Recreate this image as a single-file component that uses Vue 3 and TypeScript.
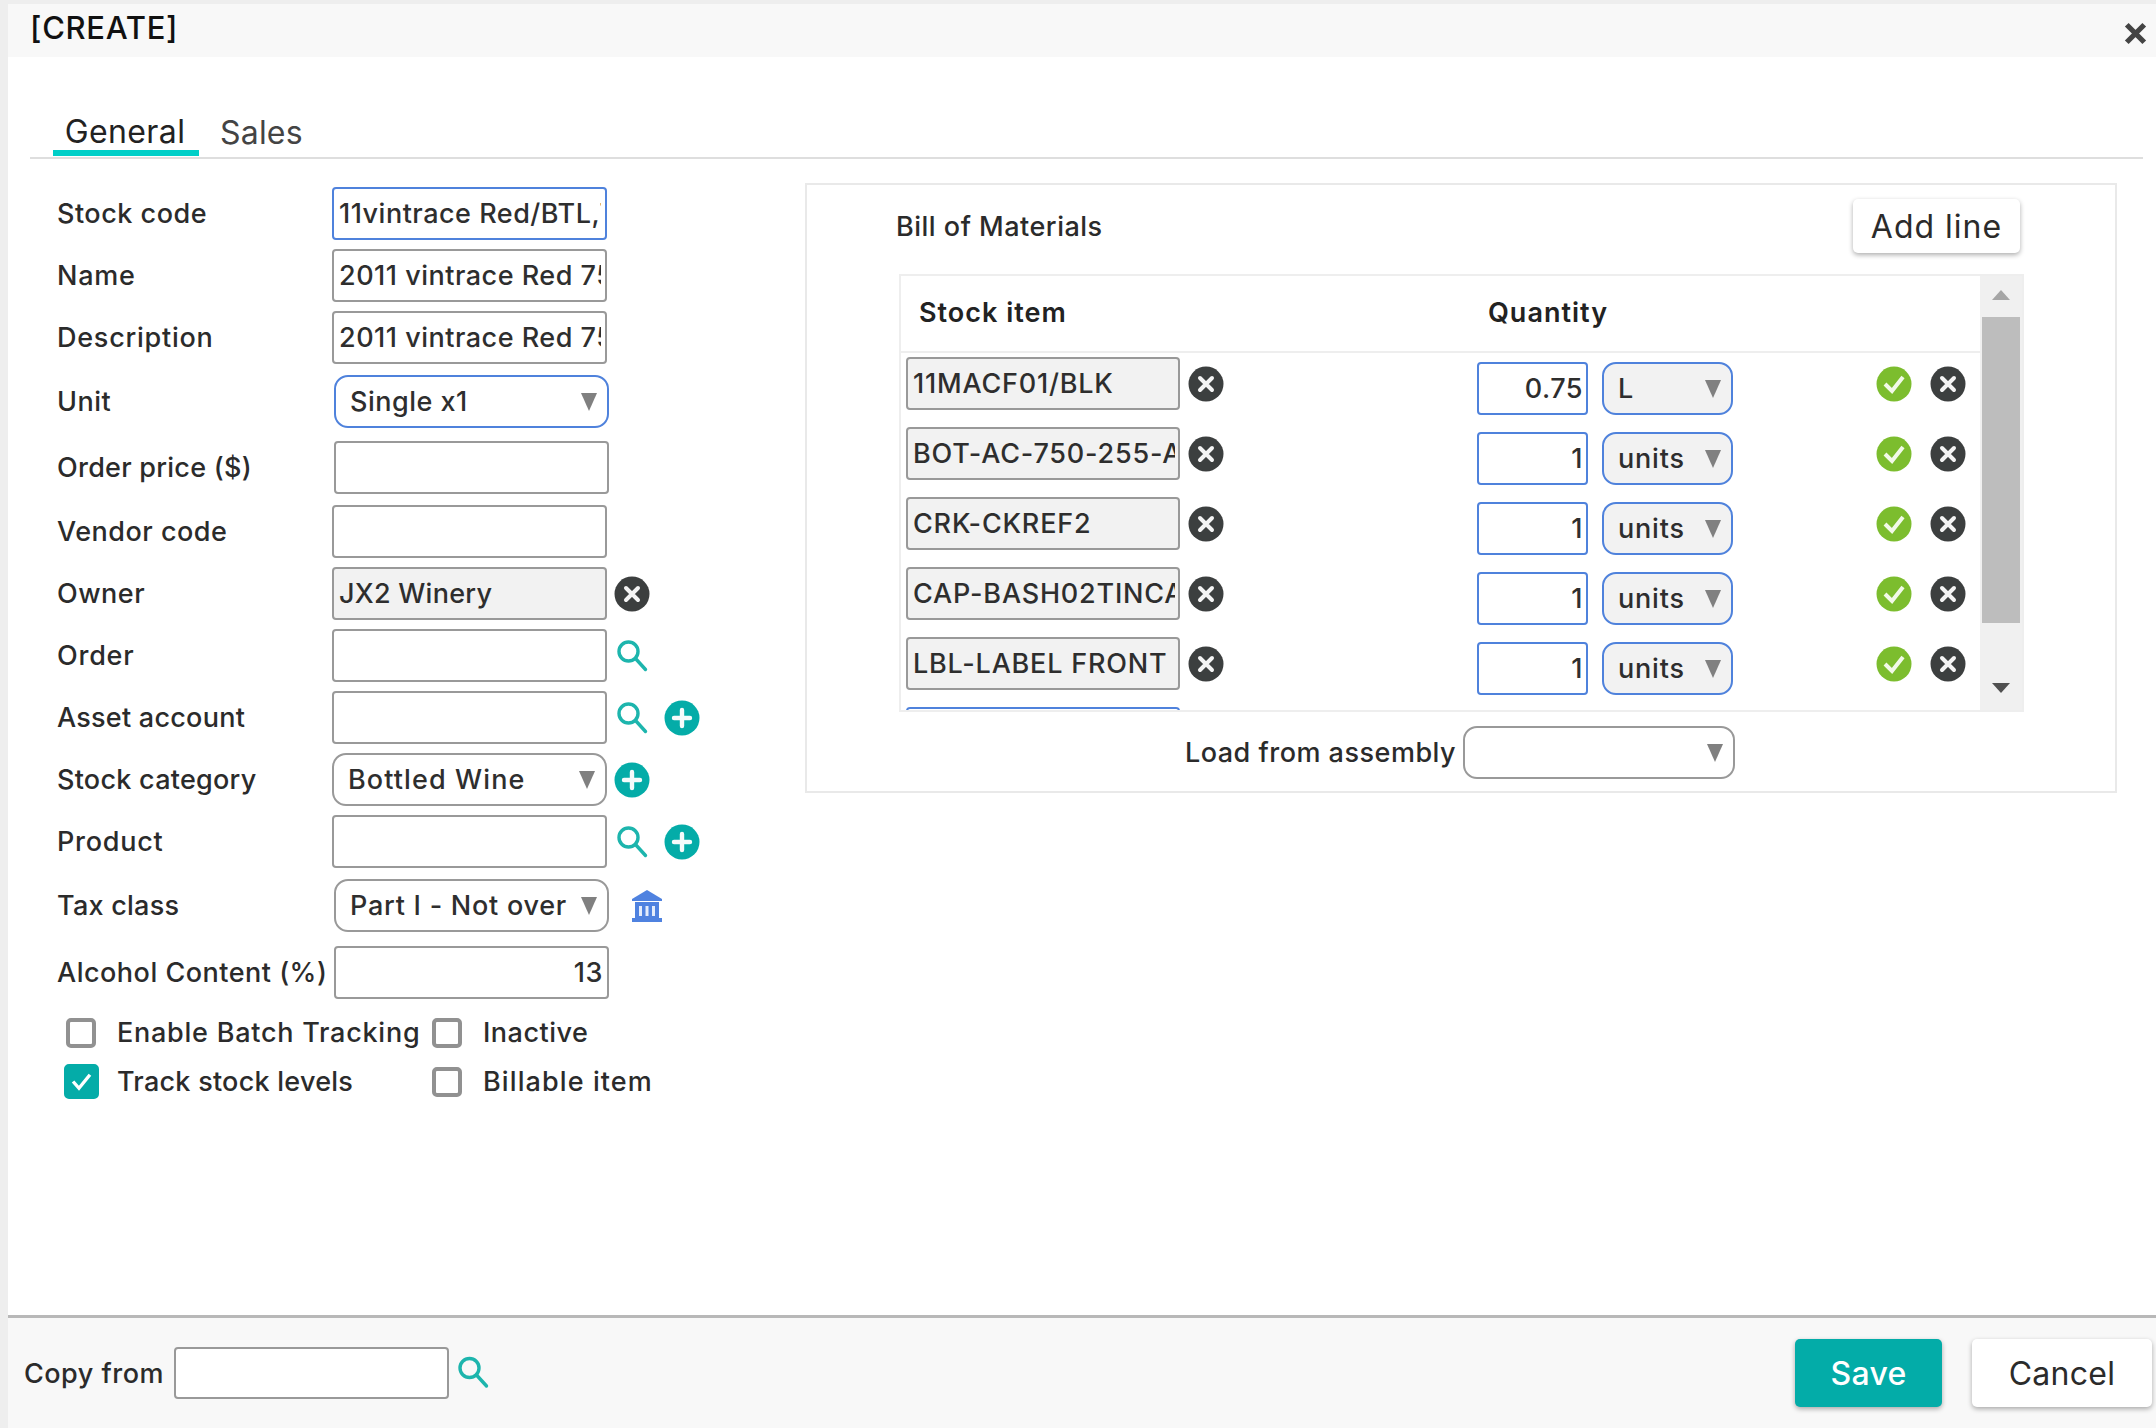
<script setup lang="ts">
interface FormRow {
  label: string
  kind: 'input' | 'locked' | 'select' | 'number'
  value?: string
  focus?: boolean
  shift?: boolean
  gap: string
  icons?: string[]
  track?: string
  valueTrack?: string
}

const rows: FormRow[] = [
  { label: 'Stock code', kind: 'input', value: '11vintrace Red/BTL,750', focus: true, gap: 'g0' },
  { label: 'Name', kind: 'input', value: '2011 vintrace Red 750ml', gap: 'g9', track: 'ls-wide' },
  { label: 'Description', kind: 'input', value: '2011 vintrace Red 750ml', gap: 'g9', track: 'ls-wide' },
  { label: 'Unit', kind: 'select', value: 'Single x1', focus: true, shift: true, gap: 'g11' },
  { label: 'Order price ($)', kind: 'input', value: '', shift: true, gap: 'g13', track: 'ls-tight' },
  { label: 'Vendor code', kind: 'input', value: '', gap: 'g11' },
  { label: 'Owner', kind: 'locked', value: 'JX2 Winery', gap: 'g9', icons: ['clear'], valueTrack: 'ls-tight' },
  { label: 'Order', kind: 'input', value: '', gap: 'g9', icons: ['search'], track: 'ls-wide' },
  { label: 'Asset account', kind: 'input', value: '', gap: 'g9', icons: ['search', 'plus'], track: 'ls-tight' },
  { label: 'Stock category', kind: 'select', value: 'Bottled Wine', gap: 'g9', icons: ['plus'], track: 'ls-tight', valueTrack: 'ls-wider' },
  { label: 'Product', kind: 'input', value: '', gap: 'g9', icons: ['search', 'plus'], track: 'ls-wide' },
  { label: 'Tax class', kind: 'select', value: 'Part I - Not over', shift: true, gap: 'g11', icons: ['bank'], track: 'ls-tight', valueTrack: 'ls-wide' },
  { label: 'Alcohol Content (%)', kind: 'number', value: '13', shift: true, gap: 'g14' }
]

const lines = [
  { item: '11MACF01/BLK', qty: '0.75', unit: 'L' },
  { item: 'BOT-AC-750-255-ANTIQUE', qty: '1', unit: 'units' },
  { item: 'CRK-CKREF2', qty: '1', unit: 'units' },
  { item: 'CAP-BASH02TINCAP', qty: '1', unit: 'units' },
  { item: 'LBL-LABEL FRONT', qty: '1', unit: 'units' }
]
</script>

<template>
  <div class="root">
    <header class="head">
      <h1 class="title">[CREATE]</h1>
      <svg class="close" viewBox="0 0 20 20" aria-label="Close">
        <path d="M3 3 L17 17 M17 3 L3 17" />
      </svg>
    </header>

    <main class="main">
      <nav class="tabs">
        <span class="tab active">General</span>
        <span class="tab">Sales</span>
      </nav>

      <div class="content">
        <section class="form">
          <div v-for="r in rows" :key="r.label" class="row" :class="r.gap">
            <label class="lbl" :class="r.track">{{ r.label }}</label>
            <div class="ctl" :class="{ shift: r.shift }">
              <input
                v-if="r.kind === 'input' || r.kind === 'number' || r.kind === 'locked'"
                class="field"
                :class="[{ focus: r.focus, locked: r.kind === 'locked', num: r.kind === 'number' }, r.valueTrack]"
                :value="r.value"
                readonly
              />
              <div v-else class="select" :class="[{ focus: r.focus }, r.valueTrack]">
                <span class="sel-text">{{ r.value }}</span>
                <i class="arrow"></i>
              </div>
            </div>
            <div class="icons" v-if="r.icons">
              <template v-for="ic in r.icons" :key="ic">
                <svg v-if="ic === 'clear'" class="ico" viewBox="0 0 36 36">
                  <circle cx="18" cy="18" r="17.5" fill="#3c3f3f" />
                  <path d="M12 12 L24 24 M24 12 L12 24" stroke="#f4f4f4" stroke-width="4" stroke-linecap="round" />
                </svg>
                <svg v-else-if="ic === 'search'" class="ico" viewBox="0 0 36 36">
                  <circle cx="14.5" cy="13.5" r="9.5" fill="none" stroke="#1db5ad" stroke-width="3.4" />
                  <path d="M21.5 20.5 L31.5 31.5" stroke="#1db5ad" stroke-width="3.4" stroke-linecap="round" />
                </svg>
                <svg v-else-if="ic === 'plus'" class="ico" viewBox="0 0 36 36">
                  <circle cx="18" cy="18" r="17.5" fill="#04aca8" />
                  <path d="M18 10 V26 M10 18 H26" stroke="#f4fbfb" stroke-width="4.4" stroke-linecap="round" />
                </svg>
                <svg v-else class="ico bank" viewBox="0 0 36 36">
                  <path d="M18 2 L33 11 V13 H3 V11 Z" fill="#4f82e0" />
                  <path d="M6 14 H30 V30 H6 Z" fill="#4f82e0" />
                  <path d="M10 18 H13 V28 H10 Z M16.5 18 H19.5 V28 H16.5 Z M23 18 H26 V28 H23 Z" fill="#e4ecfb" />
                  <path d="M3 30 H33 V34 H3 Z" fill="#4f82e0" />
                </svg>
              </template>
            </div>
          </div>

          <div class="checks">
            <label class="chk ls-wide"><span class="box"></span>Enable Batch Tracking</label>
            <label class="chk"><span class="box"></span>Inactive</label>
            <label class="chk ls-tight">
              <span class="box on">
                <svg viewBox="0 0 32 32"><path d="M6 16 L13 24 L26 8" fill="none" stroke="#fff" stroke-width="4" /></svg>
              </span>Track stock levels
            </label>
            <label class="chk ls-wider"><span class="box"></span>Billable item</label>
          </div>
        </section>

        <section class="bom">
          <div class="bom-head">
            <span class="bom-title">Bill of Materials</span>
            <button class="btn add">Add line</button>
          </div>

          <div class="tbl">
            <div class="tbl-body">
              <div class="tbl-head">
                <span class="th-item">Stock item</span>
                <span class="th-qty">Quantity</span>
              </div>
              <div class="tbl-rows">
                <div v-for="l in lines" :key="l.item" class="line">
                  <input class="field locked item" :value="l.item" readonly />
                  <svg class="ico item-x" viewBox="0 0 36 36">
                    <circle cx="18" cy="18" r="17.5" fill="#3c3f3f" />
                    <path d="M12 12 L24 24 M24 12 L12 24" stroke="#f4f4f4" stroke-width="4" stroke-linecap="round" />
                  </svg>
                  <input class="field focus num qty" :value="l.qty" readonly />
                  <div class="select focus unit">
                    <span class="sel-text">{{ l.unit }}</span>
                    <i class="arrow"></i>
                  </div>
                  <svg class="ico ok" viewBox="0 0 36 36">
                    <circle cx="18" cy="18" r="17.5" fill="#7cbd2e" />
                    <path d="M9 18 L16 25 L27 11" fill="none" stroke="#f2f9e8" stroke-width="4" />
                  </svg>
                  <svg class="ico rm" viewBox="0 0 36 36">
                    <circle cx="18" cy="18" r="17.5" fill="#3c3f3f" />
                    <path d="M12 12 L24 24 M24 12 L12 24" stroke="#f4f4f4" stroke-width="4" stroke-linecap="round" />
                  </svg>
                </div>
                <div class="line">
                  <input class="field focus item" value="" readonly />
                </div>
              </div>
            </div>
            <div class="sbar">
              <i class="sb-up"></i>
              <div class="thumb"></div>
              <i class="sb-down"></i>
            </div>
          </div>

          <div class="load">
            <label class="load-lbl">Load from assembly</label>
            <div class="select load-sel">
              <span class="sel-text"></span>
              <i class="arrow"></i>
            </div>
          </div>
        </section>
      </div>
    </main>

    <footer class="foot">
      <label class="copy">Copy from</label>
      <input class="field copy-in" value="" readonly />
      <svg class="ico copy-s" viewBox="0 0 36 36">
        <circle cx="14.5" cy="13" r="9.5" fill="none" stroke="#1db5ad" stroke-width="3.4" />
        <path d="M21.5 20 L31.5 31" stroke="#1db5ad" stroke-width="3.4" stroke-linecap="round" />
      </svg>
      <button class="btn save">Save</button>
      <button class="btn cancel">Cancel</button>
    </footer>
  </div>
</template>

<style>
html, body { margin: 0; padding: 0; background: #fff; }
</style>

<style scoped>
.root {
  box-sizing: border-box;
  width: 2156px;
  height: 1428px;
  padding: 4px 0 0 8px;
  background: #eeeeee;
  display: flex;
  flex-direction: column;
  overflow: hidden;
  font-family: Inter, "Noto Sans", sans-serif;
  font-size: 27px;
  font-weight: 500;
  letter-spacing: 0.5px;
  color: #2b2b2b;
}

.head {
  flex: 0 0 53px;
  background: #f8f8f8;
  display: flex;
  align-items: center;
  justify-content: space-between;
  padding: 0 8px 0 22px;
}
.title { margin: 0 0 6px; font-size: 31px; font-weight: 500; color: #111; letter-spacing: 0.7px; }
.close { width: 25px; height: 25px; margin-top: 5px; }
.close path { stroke: #444; stroke-width: 4.2; fill: none; }

.main { flex: 1; min-height: 0; background: #fff; padding: 0 13px 0 22px; display: flex; flex-direction: column; }
.tabs {
  height: 102px;
  flex: none;
  box-sizing: border-box;
  display: flex;
  align-items: flex-end;
  padding-left: 23px;
  border-bottom: 2px solid #dedede;
}
.tab { font-size: 32px; font-weight: 400; color: #444; padding: 0 0 4px; margin-left: 21px; line-height: 40px; letter-spacing: 0.2px; }
.tab.active {
  box-sizing: border-box;
  margin-left: 0;
  width: 146px;
  text-align: center;
  color: #222;
  border-bottom: 6px solid #00cfc8;
  margin-bottom: 1px;
  padding: 0 2px 0 0;
  line-height: 36px;
  letter-spacing: 0.4px;
}

.content { display: flex; align-items: flex-start; }
.form { flex: 0 0 775px; box-sizing: border-box; padding: 28px 0 0 27px; }
.row { display: flex; align-items: center; height: 53px; }
.g0 { margin-top: 0; }
.g9 { margin-top: 9px; }
.g11 { margin-top: 11px; }
.g13 { margin-top: 13px; }
.g14 { margin-top: 14px; }
.lbl { flex: 0 0 275px; white-space: nowrap; }
.ctl { flex: 0 0 275px; }
.ctl.shift { margin-left: 2px; margin-right: -2px; }

.field {
  box-sizing: border-box;
  width: 100%;
  height: 53px;
  padding: 0 4px 0 5px;
  border: 2px solid #999;
  border-radius: 4px;
  background: #fff;
  font-family: inherit;
  font-size: inherit;
  font-weight: inherit;
  letter-spacing: 0.5px;
  color: #2e2e2e;
  outline: none;
  display: block;
}
.field.focus { border-color: #4f82dc; }
.field.locked { background: #f2f2f2; }
.field.num { text-align: right; }

.select {
  position: relative;
  box-sizing: border-box;
  width: 100%;
  height: 53px;
  border: 2px solid #999;
  border-radius: 14px;
  background: #fff;
  padding: 0 32px 0 14px;
  display: flex;
  align-items: center;
  overflow: hidden;
  white-space: nowrap;
  color: #2e2e2e;
}
.select.focus { border-color: #4f82dc; }
.sel-text { overflow: hidden; }
.arrow {
  position: absolute;
  right: 10px;
  top: 16px;
  width: 0;
  height: 0;
  border-left: 8px solid transparent;
  border-right: 8px solid transparent;
  border-top: 18px solid #808080;
}

.ls-tight, .field.ls-tight { letter-spacing: 0.25px; }
.ls-wide, .field.ls-wide { letter-spacing: 0.75px; }
.ls-wider, .field.ls-wider { letter-spacing: 1.1px; }

.icons { display: flex; gap: 14px; margin-left: 7px; }
.ico { width: 36px; height: 36px; display: block; flex: none; }
.bank { margin-left: 15px; }

.checks {
  display: grid;
  grid-template-columns: 366px auto;
  grid-auto-rows: 49px;
  margin: 9px 0 0 9px;
}
.chk { display: flex; align-items: center; white-space: nowrap; }
.box {
  box-sizing: border-box;
  width: 30px;
  height: 30px;
  flex: none;
  border: 4px solid #919191;
  border-radius: 5px;
  margin: 0 21px 0 0;
  background: #fff;
}
.box.on { background: #04aca8; border-color: #04aca8; width: 35px; height: 35px; margin: 0 18px 0 -2px; }
.box.on svg { display: block; width: 27px; height: 27px; }

.bom {
  box-sizing: border-box;
  width: 1312px;
  height: 610px;
  margin-top: 24px;
  border: 2px solid #e9e9e9;
  padding: 14px 0 0 92px;
}
.bom-head { display: flex; align-items: center; justify-content: space-between; width: 1125px; box-sizing: border-box; padding-right: 4px; }
.bom-title { margin-left: -3px; }
.btn {
  font-family: inherit;
  font-weight: 500;
  border: 0;
  border-radius: 5px;
  background: #fff;
  color: #2b2b2b;
  box-shadow: 0 2px 5px rgba(0, 0, 0, 0.32);
  padding: 0;
  letter-spacing: 0.3px;
}
.add { width: 167px; height: 54px; font-size: 32px; font-weight: 400; letter-spacing: 1px; }

.tbl {
  box-sizing: border-box;
  width: 1125px;
  height: 438px;
  margin-top: 21px;
  border: 2px solid #eeeeee;
  display: flex;
}
.tbl-body { flex: 0 0 1079px; display: flex; flex-direction: column; overflow: hidden; }
.tbl-head {
  flex: 0 0 77px;
  box-sizing: border-box;
  border-bottom: 2px solid #eeeeee;
  display: flex;
  align-items: center;
  font-weight: 600;
  color: #222;
  letter-spacing: 1px;
  padding: 0 0 2px 18px;
}
.th-item { flex: 0 0 569px; }
.tbl-rows { flex: 1; overflow: hidden; }
.line { display: flex; align-items: flex-start; height: 70px; box-sizing: border-box; padding: 4px 0 0 5px; }
.field.item { width: 274px; flex: none; padding: 0 3px 0 5px; letter-spacing: 0.8px; }
.item-x { margin: 9px 0 0 8px; }
.field.qty { width: 111px; flex: none; margin: 5px 0 0 253px; padding: 0 3px; }
.select.unit { width: 131px; flex: none; margin: 5px 0 0 14px; background: #f2f2f2; padding-left: 14px; letter-spacing: 0.8px; }
.select.unit .arrow { right: 10px; }
.ok { margin: 9px 0 0 143px; }
.rm { margin: 9px 0 0 18px; }

.sbar { flex: 1; background: #f0f0f0; display: flex; flex-direction: column; padding-left: 2px; position: relative; }
.thumb { width: 38px; height: 306px; margin-top: 17px; background: #bdbdbd; }
.sb-up { margin: 14px 0 0 10px; width: 0; height: 0; border-left: 9px solid transparent; border-right: 9px solid transparent; border-bottom: 10px solid #a5a5a5; }
.sb-down { margin: 60px 0 0 10px; width: 0; height: 0; border-left: 9px solid transparent; border-right: 9px solid transparent; border-top: 10px solid #505050; }

.load { width: 1125px; display: flex; justify-content: center; align-items: center; margin-top: 14px; gap: 7px; padding-right: 3px; box-sizing: border-box; }
.select.load-sel { width: 272px; }

.foot {
  flex: 0 0 113px;
  box-sizing: border-box;
  border-top: 3px solid #b8b8b8;
  background: #f8f8f8;
  display: flex;
  align-items: center;
  padding: 0 4px 0 16px;
}
.copy { white-space: nowrap; width: 150px; }
.field.copy-in { width: 275px; height: 52px; }
.copy-s { margin-left: 6px; }
.save { width: 147px; height: 68px; font-size: 32px; background: #03aca8; color: #fff; margin-left: auto; }
.cancel { width: 180px; height: 68px; font-size: 32px; font-weight: 400; margin-left: 30px; }
</style>
